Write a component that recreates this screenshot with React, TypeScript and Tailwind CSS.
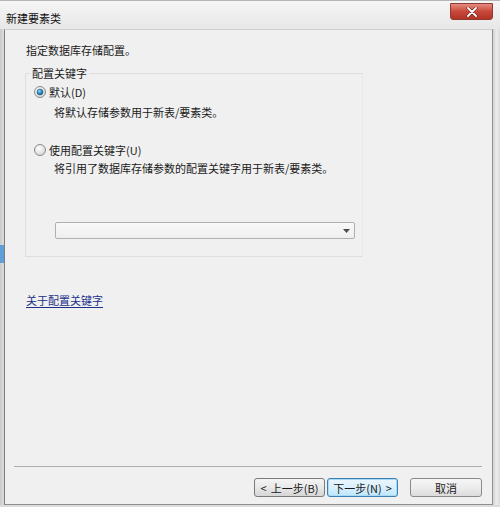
import React from "react";

const font = { fontFamily: '"Noto Sans CJK SC", "Noto Sans", sans-serif' };

function Radio({ checked }: { checked: boolean }) {
  return (
    <svg width="12" height="12" viewBox="0 0 12 12" className="shrink-0">
      <defs>
        <radialGradient id={checked ? "rgc" : "rgu"} cx="0.4" cy="0.35" r="0.7">
          <stop offset="0" stopColor="#ffffff" />
          <stop offset="1" stopColor="#d4d4d4" />
        </radialGradient>
        <radialGradient id="dot" cx="0.4" cy="0.35" r="0.7">
          <stop offset="0" stopColor="#9fe3f6" />
          <stop offset="0.5" stopColor="#2a8fc7" />
          <stop offset="1" stopColor="#15507a" />
        </radialGradient>
      </defs>
      <circle cx="6" cy="6" r="5.5" fill={`url(#${checked ? "rgc" : "rgu"})`} stroke="#8a8a8a" />
      {checked && <circle cx="6" cy="6" r="3" fill="url(#dot)" stroke="#1f5f86" strokeWidth="0.6" />}
    </svg>
  );
}

export default function App() {
  return (
    <div className="w-[500px] h-[507px] overflow-hidden bg-[#e6e6e6] text-[#1a1a1a] text-[11px] leading-[16px]" style={font}>
      {/* Title bar */}
      <div className="h-[29px] flex items-start justify-between border-t border-[#b5b5b5] bg-gradient-to-b from-[#f6f6f6] via-[#eeeeee] to-[#e7e7e7]">
        <div className="pl-[6px] pt-[9px] text-[11px] text-[#111]">新建要素类</div>
        <div className="mt-[2px] mr-[7px] w-[43px] h-[17px] rounded-b-[3px] border border-[#8e3a30] bg-gradient-to-b from-[#e48b7e] via-[#c9473a] to-[#b23426] flex items-center justify-center">
          <svg width="12" height="10" viewBox="0 0 12 10">
            <path d="M2 1 L10 9 M10 1 L2 9" stroke="#5a1f18" strokeWidth="3" strokeLinecap="round" />
            <path d="M2 1 L10 9 M10 1 L2 9" stroke="#ffffff" strokeWidth="1.8" strokeLinecap="round" />
          </svg>
        </div>
      </div>

      <div className="flex h-[476px]">
        {/* Left desktop strip */}
        <div className="w-[4px] flex flex-col">
          <div className="h-[216px] bg-gradient-to-r from-[#c9c9c9] to-[#dedede]" />
          <div className="h-[18px] bg-[#5f9fd8]" />
          <div className="flex-1 bg-gradient-to-r from-[#c9c9c9] to-[#dedede]" />
        </div>

        {/* Content panel */}
        <div className="w-[489px] flex flex-col bg-[#f0f0f0] border-l border-l-[#7c7c7c] border-t border-t-[#cfcfcf] border-r border-r-[#8f8f8f] border-b border-b-[#8f8f8f]">
          <div className="pl-[20px] pt-[12px] flex flex-col">
            <div className="ml-[1px]">指定数据库存储配置。</div>

            <fieldset className="mt-[7px] w-[338px] border border-[#dedede] border-r-[#e8e8e8] px-[6px] pb-[17px]">
              <legend className="px-[2px] -ml-[2px] leading-[16px]">配置关键字</legend>
              <div className="mt-[3px] ml-[2px] flex items-center gap-[3px] h-[16px]">
                <Radio checked />
                <span>默认(D)</span>
              </div>
              <div className="mt-[4px] ml-[22px]">将默认存储参数用于新表/要素类。</div>
              <div className="mt-[22px] ml-[2px] flex items-center gap-[3px] h-[16px]">
                <Radio checked={false} />
                <span>使用配置关键字(U)</span>
              </div>
              <div className="mt-[2px] ml-[22px]">将引用了数据库存储参数的配置关键字用于新表/要素类。</div>
              <div className="mt-[46px] ml-[23px] w-[300px] h-[17px] border border-[#b0b0b0] rounded-[2px] bg-gradient-to-b from-[#f8f8f8] to-[#efefef] flex items-center justify-end pr-[4px]">
                <svg width="7" height="4" viewBox="0 0 7 4">
                  <path d="M0 0 L7 0 L3.5 4 Z" fill="#4a4a4a" />
                </svg>
              </div>
            </fieldset>

            <div className="mt-[35px] ml-[1px]">
              <span className="underline text-[#1b2f8a] underline-offset-[2px]">关于配置关键字</span>
            </div>
          </div>

          <div className="flex-1" />

          <div className="ml-[9px] mr-[10px] h-px bg-[#adadad]" />
          <div className="mt-[11px] mb-[7px] mr-[10px] flex justify-end items-center">
            <button className="w-[71px] h-[19px] rounded-[3px] border border-[#7a7a7a] bg-gradient-to-b from-[#f4f4f4] via-[#e8e8e8] to-[#d6d6d6] text-[11px] leading-[16px] text-[#1a1a1a] flex items-center justify-center gap-[4px]">
              <span>&lt;</span>
              <span>上一步(B)</span>
            </button>
            <button className="ml-[2px] w-[71px] h-[19px] rounded-[3px] border border-[#3c7fb1] bg-gradient-to-b from-[#eaf6fd] via-[#d9f0fc] to-[#bee6fd] text-[11px] leading-[16px] text-[#1a1a1a] flex items-center justify-center gap-[4px] shadow-[inset_0_0_0_1px_#a9dbf6]">
              <span>下一步(N)</span>
              <span>&gt;</span>
            </button>
            <button className="ml-[12px] w-[72px] h-[19px] rounded-[3px] border border-[#8a8a8a] bg-gradient-to-b from-[#f6f6f6] via-[#ececec] to-[#dcdcdc] text-[11px] leading-[16px] text-[#1a1a1a] flex items-center justify-center">
              取消
            </button>
          </div>
        </div>

        {/* Right frame */}
        <div className="w-[7px] bg-gradient-to-r from-[#d2d2d2] via-[#ebebeb] to-[#dcdcdc]" />
      </div>
      <div className="h-[2px] bg-[#dcdcdc]" />
    </div>
  );
}
